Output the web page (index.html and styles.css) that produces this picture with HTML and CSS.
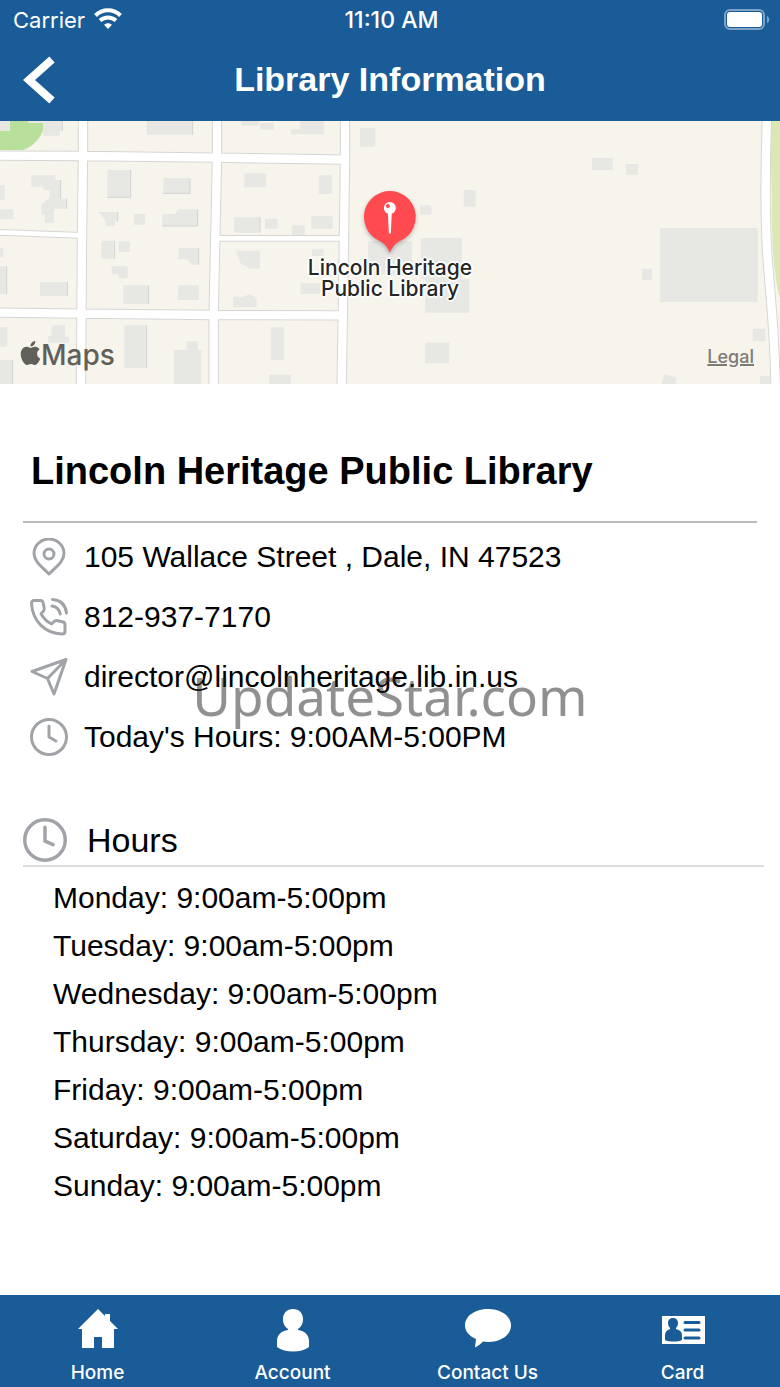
FILE: index.html
```
<!DOCTYPE html>
<html lang="en">
<head>
    <meta charset="UTF-8">
    <meta name="viewport" content="width=device-width, initial-scale=1.0">
    <title>Library Information</title>
    <link rel="stylesheet" href="styles.css">
</head>
<body>
    <header class="header">
        <div class="status-bar">
            <div class="carrier">
                <span>Carrier</span>
                <svg width="28" height="21" viewBox="0 0 28 21" fill="none" stroke="#fff" stroke-width="4">
                    <path d="M1.500 7.500C8.500 .5 19.500 .5 26.500 7.500"/>
                    <path d="M6 12.500c4.600-4.100 11.400-4.100 16 0"/>
                    <path d="M14 21l-4-4.200c2.300-2.100 5.700-2.100 8 0z" fill="#fff" stroke="none"/>
                </svg>
            </div>
            <span class="time">11:10 AM</span>
            <svg class="battery" width="46" height="22" viewBox="0 0 46 22">
                <rect x="1" y="1" width="39" height="19" rx="5" fill="none" stroke="#7ea3c8" stroke-width="2"/>
                <rect x="3" y="3" width="35" height="15" rx="3" fill="#fff"/>
                <path d="M43 7c3 1 3 6 0 7z" fill="#7ea3c8"/>
            </svg>
        </div>
        <div class="title-bar">
            <button class="back" type="button" aria-label="Back">
                <svg width="34" height="48" viewBox="0 0 34 48" fill="none" stroke="#fff" stroke-width="8">
                    <path d="M30 3.500L7 24l23 20.500"/>
                </svg>
            </button>
            <h1>Library Information</h1>
        </div>
    </header>

    <section class="map" aria-label="Map">
        <svg class="map-canvas" viewBox="0 9 2340 789" preserveAspectRatio="xMidYMid slice">
            <rect y="9" width="2340" height="789" fill="#f7f4ec"/>
            <path d="M0 9h134c0 40-30 75-65 87H0z" fill="#b9e09a"/>
            <path d="M2310 9h30v530c-20-60-26-200-24-280z" fill="#dbe8b3"/>
            <!-- buildings -->
            <g fill="#e7e7e4">
                <path d="M0 9h30v30H0zM85 9h102v30h-8v14h-50V15H85zM440 9h138v41H440zM725 9h50v14h-50zM780 15h42v20h-42zM900 9h72v40H872V34h28z"/>
                <path d="M94 172h72v14h16v56h18v30h-38v42h-28v-24h-10v-30l24-20v-24h-18v-10H94zM0 202h14v44H0zM0 274h40v30H0z"/>
                <path d="M322 156h70v82h-70zM490 180h80v46h-80zM295 282h58v28h-8v14h-28v-18zM402 288h33v32h-33zM487 288h38l10-14h58v50H487z"/>
                <path d="M304 368h40v54h-40zM355 370h35v32h-35zM335 445h48v36h-28v-12h-20zM370 502h76v56h-76zM538 390h58v50h-18l-18-16h-26zM534 502h62v44h-62z"/>
                <path d="M733 166h65v42h-65zM956 172h40v56h-40zM702 298h78v46h-78zM795 302h37v30h-37zM876 322h38v28h-38zM934 294h64v38h-64z"/>
                <path d="M708 398h72v54h-30l-30-18zM902 496h60v32h-60zM700 536h30l20-8 20 12v28h-70zM936 394h34v20h-34z"/>
                <path d="M0 390h10v28H0zM0 445h20v84H0zM120 492h82v42h-82zM0 628h22v58H0zM155 622h40v34h12v18h-62v-20h10zM0 726h38v80H0z"/>
                <path d="M373 622h67v128h-67zM522 696h38v-26h34v26h10v110h-82zM812 628h40v98h-40zM808 770h64v30h-64z"/>
                <path d="M1080 30h46v56h-46zM1391 216h36v50h-36zM1260 262h34v28h-34zM1262 360h124v124h22v100h-132V484h-14zM1104 370h132v100h-132zM1276 674h72v62h-72z"/>
                <path d="M1776 120h62v36h-62zM1878 138h36v32h-36zM1980 330h293v222h-293zM1926 452h30v34h-30zM2258 632h38v38h-38zM1994 768l34 10v24h-44zM2280 774h30v24h-30z"/>
            </g>
            <g fill="none" stroke="#d3d3d2" stroke-width="3">
                <path d="M187 9v30M392 156v82h-70M570 180v46h-80M593 274v50H487M446 502v56M182 186v56M200 242v30M202 492v42M596 390v50M440 622v128M353 282v28M344 368v54M780 298v46M578 9v41M20 445v84M38 726v80"/>
            </g>
            <!-- roads, edge first and surface on top -->
            <g fill="none">
                <g stroke="#d6d6d5">
                    <path stroke-width="31" d="M249 0v113l-3 238-3 460M651 0v119l-10 470v220M1035 0v124l-4 300-6 380M0 113l249 1 402 5 384 6M0 584l243 3 398 4 390 1M2301 0c-6 150-6 340 4 450 5 70 18 170 22 360"/>
                    <path stroke-width="20" d="M0 343l246 9M640 361h392"/>
                </g>
                <g stroke="#fff">
                    <path stroke-width="25" d="M249 0v113l-3 238-3 460M651 0v119l-10 470v220M1035 0v124l-4 300-6 380M0 113l249 1 402 5 384 6M0 584l243 3 398 4 390 1M2301 0c-6 150-6 340 4 450 5 70 18 170 22 360"/>
                    <path stroke-width="14" d="M0 343l246 9M640 361h392"/>
                </g>
            </g>
        </svg>
        <div class="marker">
            <svg width="62" height="66" viewBox="0 0 62 66">
                <path class="marker-shape" d="M31 2a26 26 0 0 1 12 49c-6 3-9 6-12 13-3-7-6-10-12-13A26 26 0 0 1 31 2z" fill="#ff4b50"/>
                <path d="M29 22h4l-1 22-1 1-1-1z" fill="#fff"/>
                <circle cx="31" cy="19" r="6" fill="#fff"/>
                <circle cx="29" cy="17" r="2" fill="#ff4b50"/>
            </svg>
            <span>Lincoln Heritage<br>Public Library</span>
        </div>
        <div class="maps-logo">
            <svg width="21" height="24" viewBox="2 0 20 24" fill="#605f5a">
                <path d="M12.152 6.896c-.948 0-2.415-1.078-3.960-1.040-2.040.027-3.910 1.183-4.961 3.014-2.117 3.675-.546 9.103 1.519 12.090 1.013 1.454 2.208 3.090 3.792 3.039 1.520-.065 2.090-.987 3.935-.987 1.831 0 2.350.987 3.960.948 1.637-.026 2.676-1.480 3.676-2.948 1.156-1.688 1.636-3.325 1.662-3.415-.039-.013-3.182-1.221-3.220-4.857-.026-3.040 2.480-4.494 2.597-4.559-1.429-2.090-3.623-2.324-4.390-2.376-2-.156-3.675 1.090-4.610 1.090zM15.530 3.830c.843-1.012 1.400-2.427 1.245-3.830-1.207.052-2.662.805-3.532 1.818-.780.896-1.454 2.338-1.273 3.714 1.338.104 2.715-.688 3.559-1.701"/>
            </svg>
            <span>Maps</span>
        </div>
        <a class="legal" href="#">Legal</a>
    </section>

    <main class="content">
        <h2>Lincoln Heritage Public Library</h2>
        <ul class="contact">
            <li>
                <svg class="icon" viewBox="0 0 38 38">
                    <path d="M19 36C11 28 4 23 4 15.500a15 14.500 0 0 1 30 0c0 7.500-7 12.500-15 20.500z"/>
                    <circle cx="19" cy="16" r="5"/>
                </svg>
                <span>105 Wallace Street , Dale, IN 47523</span>
            </li>
            <li>
                <svg class="icon" viewBox="0 0 38 38">
                    <path d="M4 2.500h6.500c1.700 0 2.500 1 2.700 2.500l1 5c.3 1.500 0 2.500-1 3.500l-2.200 2.200c2.500 4.500 6 8 10.500 10.300l2.300-2.300c1-1 2-1.300 3.500-1l5 1c1.700.4 2.700 1.300 2.700 3V33c0 2-1.200 3-3 3C15 35.500 2.500 23 1.500 5.500c0-1.800.8-3 2.500-3z"/>
                    <path d="M22 8c4.500.8 7.500 3.800 8.300 8M22.500 1.500C31 2 35.500 7.500 36.500 15"/>
                </svg>
                <a href="tel:8129377170">812-937-7170</a>
            </li>
            <li>
                <svg class="icon" viewBox="0 0 38 38">
                    <path d="M36 1.500L2 13.500l15.500 7L24 36zM36 1.500l-18.500 19"/>
                </svg>
                <a href="mailto:director@lincolnheritage.lib.in.us">director@lincolnheritage.lib.in.us</a>
            </li>
            <li>
                <svg class="icon" viewBox="0 0 38 38">
                    <circle cx="19" cy="19" r="17.500"/>
                    <path d="M19 8v11l7 4"/>
                </svg>
                <span>Today's Hours: 9:00AM-5:00PM</span>
            </li>
        </ul>

        <section class="hours">
            <h3>
                <svg class="icon icon-large" viewBox="0 0 38 38">
                    <circle cx="19" cy="19" r="17.500"/>
                    <path d="M19 8v12l7 3"/>
                </svg>
                <span>Hours</span>
            </h3>
            <ul>
                <li>Monday: 9:00am-5:00pm</li>
                <li>Tuesday: 9:00am-5:00pm</li>
                <li>Wednesday: 9:00am-5:00pm</li>
                <li>Thursday: 9:00am-5:00pm</li>
                <li>Friday: 9:00am-5:00pm</li>
                <li>Saturday: 9:00am-5:00pm</li>
                <li>Sunday: 9:00am-5:00pm</li>
            </ul>
        </section>
    </main>

    <nav class="tabs">
        <a href="#">
            <svg width="48" height="48" viewBox="0 0 48 48" fill="#fff">
                <path d="M24 4l7 7V9h5v7l8 8h-4v19H28V32h-8v11H8V24H4z"/>
            </svg>
            <span>Home</span>
        </a>
        <a href="#">
            <svg width="48" height="48" viewBox="0 0 48 48" fill="#fff">
                <path d="M24 4c6 0 10 4 10 10 0 5-2 8-5 10v1c7 1 11 5 11 11v6c-8 6-24 6-32 0v-6c0-6 4-10 11-11v-1c-3-2-5-5-5-10C14 8 18 4 24 4z"/>
            </svg>
            <span>Account</span>
        </a>
        <a href="#">
            <svg width="48" height="48" viewBox="0 0 48 48" fill="#fff">
                <path d="M24 4c13 0 23 7 23 16.500S37 37 24 37l-5-.5c-2 2-4 4-8 6l1-8.500C5 31 1 26 1 20.500 1 11 11 4 24 4z"/>
            </svg>
            <span>Contact Us</span>
        </a>
        <a href="#">
            <svg width="48" height="48" viewBox="0 0 48 48">
                <rect x="3" y="11" width="43" height="28" fill="#fff"/>
                <path d="M14 13c3 0 5 2 5 5 0 2-1 4-2 5v1c4 1 6 3 6 6v5c-4 2-13 2-17 0v-5c0-3 2-5 5-6v-1c-1-1-2-3-2-5 0-3 2-5 5-5z" fill="#195c97"/>
                <path d="M26 17.500h14M26 25h14M26 33h14" stroke="#195c97" stroke-width="3" stroke-linecap="round"/>
            </svg>
            <span>Card</span>
        </a>
    </nav>

    <div class="watermark">UpdateStar.com</div>
</body>
</html>
```
FILE: styles.css
```
* {
    box-sizing: border-box;
}
body {
    display: flex;
    flex-direction: column;
    min-height: 100vh;
    margin: 0;
    background-color: #fff;
    color: #000;
    font-family: "Liberation Sans", Arial, sans-serif;
    font-size: 30px;
}
h1, h2, h3, ul {
    margin: 0;
    padding: 0;
}
ul {
    list-style: none;
}
a {
    color: inherit;
    text-decoration: none;
}
svg {
    display: block;
    flex: none;
}

/* header */
.header {
    background-color: #195c97;
    color: #fff;
}
.status-bar {
    display: grid;
    grid-template-columns: 1fr auto 1fr;
    align-items: center;
    height: 40px;
    padding: 0 10px 0 13px;
    font-family: Inter, sans-serif;
    font-size: 22px;
}
.carrier {
    display: flex;
    align-items: center;
    gap: 9px;
}
.carrier svg {
    margin-bottom: 3px;
}
.time {
    font-size: 23px;
    font-weight: 500;
}
.battery {
    justify-self: end;
}
.title-bar {
    display: grid;
    grid-template-columns: 60px 1fr 60px;
    align-items: center;
    height: 81px;
    padding-bottom: 2px;
}
.title-bar h1 {
    font-size: 34px;
    text-align: center;
}
.back {
    padding: 0 0 0 22px;
    border: 0;
    background: none;
}

/* map */
.map {
    position: relative;
    height: 263px;
    overflow: hidden;
}
.map-canvas {
    width: 100%;
    height: 100%;
}
.marker {
    position: absolute;
    top: 68px;
    left: 50%;
    display: flex;
    flex-direction: column;
    align-items: center;
    gap: 2px;
    transform: translateX(-50%);
    color: #262626;
    font-family: Inter, sans-serif;
    font-size: 21px;
    font-weight: 500;
    line-height: 21px;
    text-align: center;
    white-space: nowrap;
    text-shadow: 0 0 3px #fff, 2px 0 1px #fff, -2px 0 1px #fff, 0 2px 1px #fff, 0 -2px 1px #fff;
}
.marker-shape {
    filter: drop-shadow(0 2px 2px rgba(0, 0, 0, 0.25));
}
.maps-logo {
    position: absolute;
    bottom: 12px;
    left: 20px;
    display: flex;
    align-items: center;
    color: #605f5a;
    font-family: Inter, sans-serif;
    font-size: 28px;
    font-weight: 500;
}
.maps-logo svg {
    margin-bottom: 4px;
}
.legal {
    position: absolute;
    right: 26px;
    bottom: 17px;
    color: #7d7b76;
    font-family: Inter, sans-serif;
    font-size: 18px;
    font-weight: 500;
    text-decoration: underline;
    text-decoration-thickness: 2px;
}

/* library details */
.content {
    flex: 1;
    padding: 37px 16px 36px 23px;
}
.content h2 {
    margin-right: 7px;
    padding-left: 8px;
    border-bottom: 2px solid #bcbcbc;
    font-size: 38px;
    line-height: 100px;
}
.contact {
    padding: 4px 0 0 7px;
}
.contact li {
    display: flex;
    align-items: center;
    gap: 16px;
    height: 60px;
}
.icon {
    width: 38px;
    height: 38px;
    fill: none;
    stroke: #a0a3a7;
    stroke-width: 3;
    stroke-linecap: round;
    stroke-linejoin: round;
}
.icon-large {
    width: 44px;
    height: 44px;
}
.hours {
    padding-top: 51px;
}
.hours h3 {
    display: flex;
    align-items: center;
    gap: 20px;
    padding-bottom: 3px;
    border-bottom: 2px solid #dcdcdc;
    font-size: 34px;
    font-weight: normal;
}
.hours ul {
    padding: 7px 0 0 30px;
    line-height: 48px;
}

/* bottom tabs */
.tabs {
    display: grid;
    grid-template-columns: repeat(4, 1fr);
    height: 92px;
    padding-top: 10px;
    background-color: #195c97;
    color: #fff;
    font-family: Inter, sans-serif;
    font-size: 19px;
    font-weight: 500;
}
.tabs a {
    display: flex;
    flex-direction: column;
    align-items: center;
    gap: 8px;
}

.watermark {
    position: fixed;
    inset: 0;
    display: flex;
    align-items: center;
    justify-content: center;
    padding-top: 4px;
    color: rgba(33, 33, 33, 0.5);
    font-family: "Noto Sans", sans-serif;
    font-size: 53px;
    pointer-events: none;
}
```
